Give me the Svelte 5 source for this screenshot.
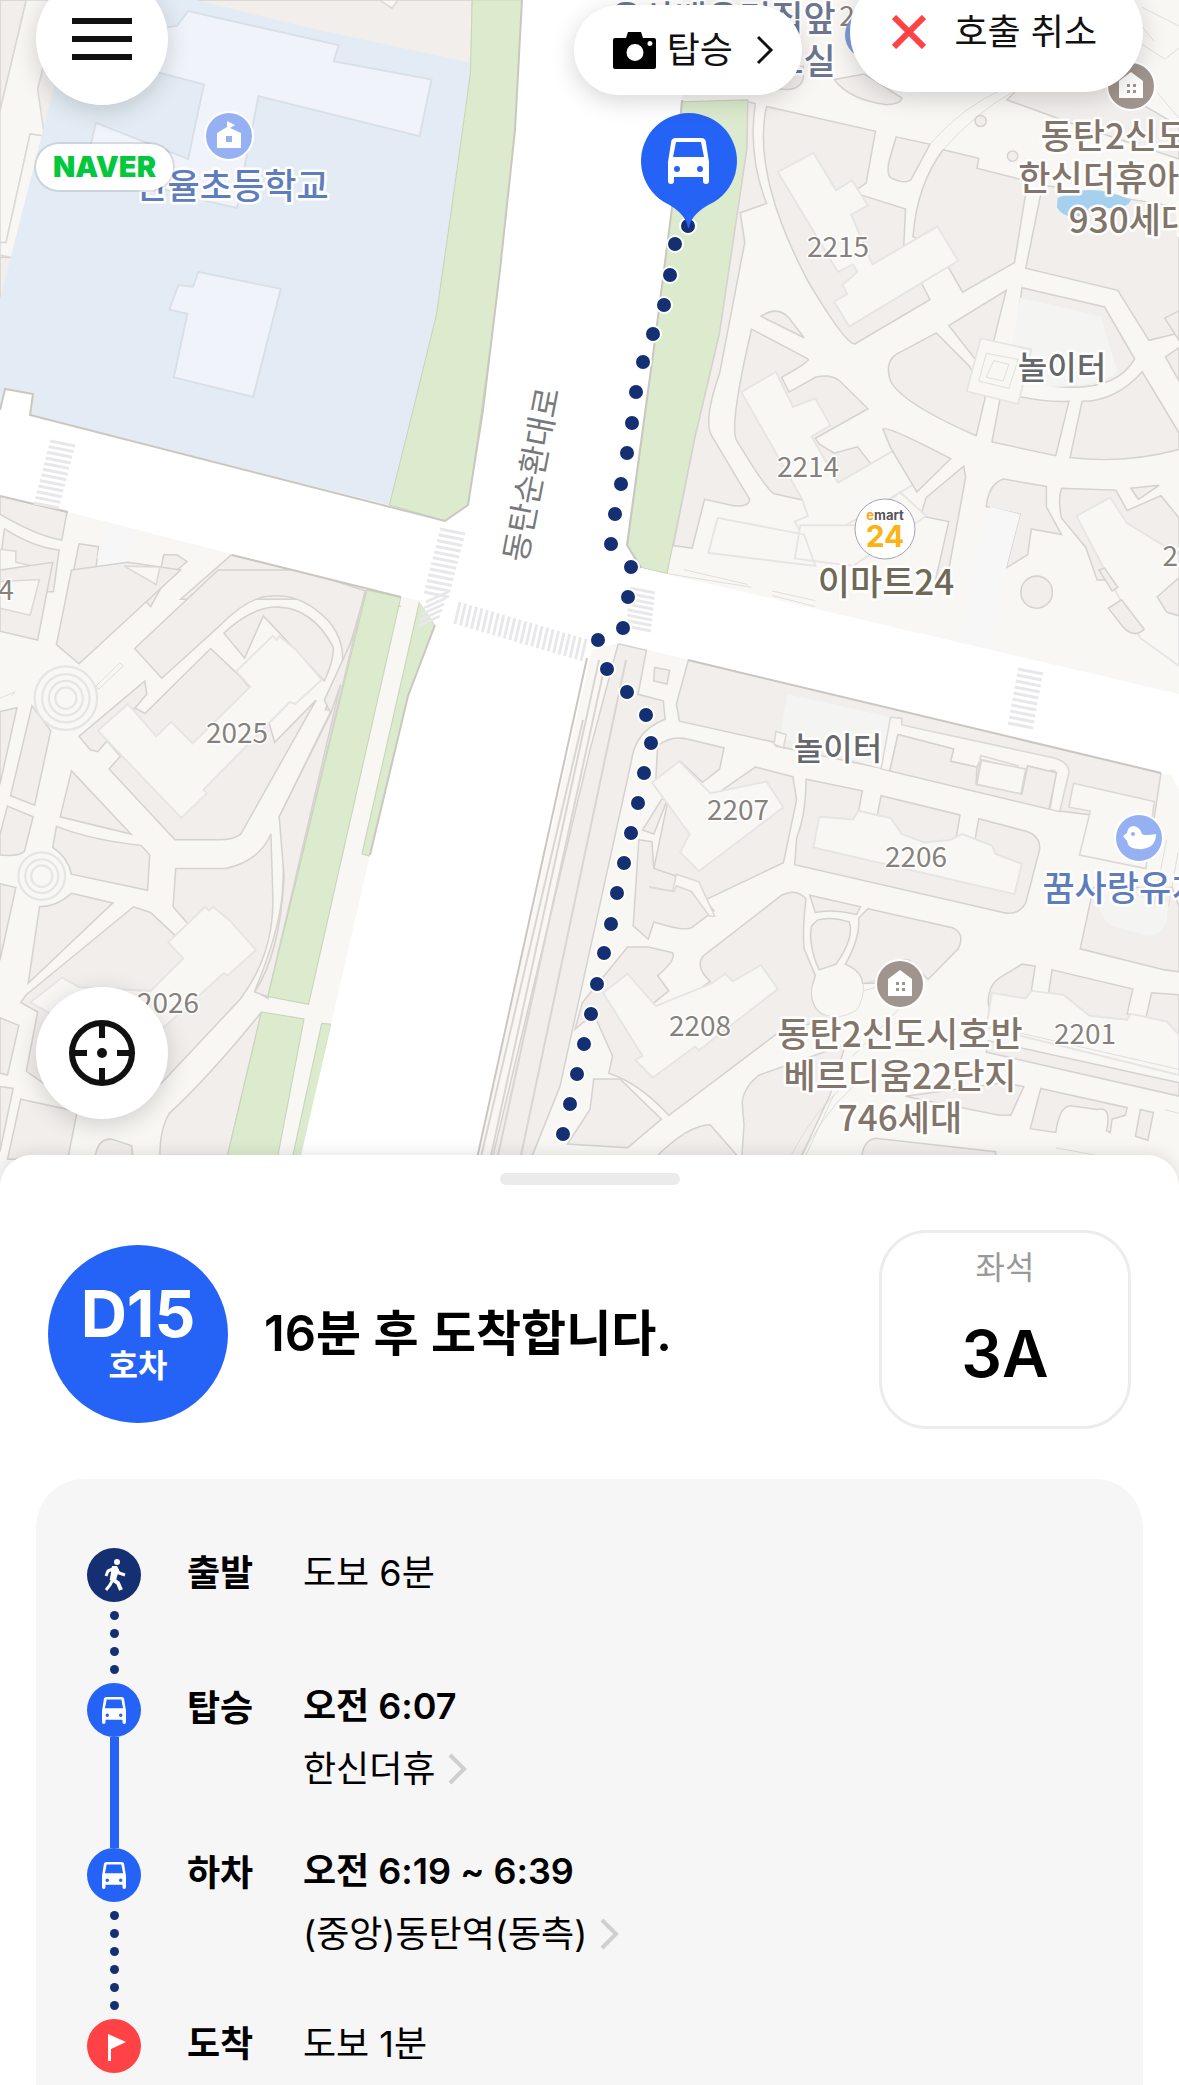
<script lang="ts">
  type Point = [number, number];

  const route: Point[] = [
    [688, 226], [675, 244], [670, 275], [664, 305], [653, 334], [643, 362], [636, 392],
    [632, 423], [627, 453], [621, 484], [615, 514], [611, 544], [631, 567], [628, 597],
    [623, 628], [598, 640], [607, 669], [627, 692], [646, 715], [651, 743], [644, 773],
    [638, 803], [631, 833], [624, 863], [617, 893], [611, 924], [604, 953], [597, 984],
    [591, 1014], [584, 1044], [577, 1074], [570, 1104], [563, 1134]
  ];

  const buildingNumbers = [
    { text: '2215', x: 838, y: 257 },
    { text: '2214', x: 808, y: 477 },
    { text: '2207', x: 738, y: 820 },
    { text: '2206', x: 916, y: 867 },
    { text: '2208', x: 700, y: 1036 },
    { text: '2201', x: 1085, y: 1044 },
    { text: '2025', x: 237, y: 743 },
    { text: '2026', x: 168, y: 1013 },
    { text: '4', x: 6, y: 600 },
    { text: '22', x: 1178, y: 566 },
    { text: '2', x: 847, y: 26 }
  ];

  const places = [
    { lines: ['한율초등학교'], x: 232, y: 199, kind: 'school' },
    { lines: ['유산배우리집앞', '방과후학습교실'], x: 723, y: 31, kind: 'bus', gap: 43 },
    { lines: ['동탄2신도시', '한신더휴아파트', '930세대'], x: 1131, y: 149, kind: 'apartment', gap: 42 },
    { lines: ['동탄2신도시호반', '베르디움22단지', '746세대'], x: 900, y: 1047, kind: 'apartment', gap: 42 },
    { lines: ['이마트24'], x: 886, y: 595, kind: 'store' },
    { lines: ['꿈사랑유치원'], x: 1139, y: 901, kind: 'school' }
  ];

  const steps = [
    { label: '출발', icon: 'walk', info: '도보 6분', line: 'dots', dots: 4 },
    { label: '탑승', icon: 'bus', time: '오전 6:07', stop: '한신더휴', line: 'solid', dots: 0 },
    { label: '하차', icon: 'bus', time: '오전 6:19 ~ 6:39', stop: '(중앙)동탄역(동측)', line: 'dots', dots: 6 },
    { label: '도착', icon: 'flag', info: '도보 1분', line: '', dots: 0 }
  ];

  // evenly spaced stripes between two points
  const stripes = (from: Point, to: Point, across: Point, count: number) =>
    Array.from({ length: count }, (_, i) => {
      const t = i / (count - 1);
      const x = from[0] + (to[0] - from[0]) * t;
      const y = from[1] + (to[1] - from[1]) * t;
      return `M${x} ${y}l${across[0]} ${across[1]}`;
    }).join('');

  const crossings = [
    stripes([50, 441], [34, 503], [25, 5], 12),
    stripes([440, 529], [424, 592], [25, 5], 12),
    stripes([448, 592], [440, 616], [-22, 10], 5),
    stripes([460, 602], [586, 639], [-5, 22], 24),
    stripes([630, 588], [626, 626], [25, 5], 8),
    stripes([1018, 669], [1008, 723], [25, 5], 10)
  ].join('');
</script>

{#snippet bus()}
  <path
    fill="currentColor"
    fill-rule="evenodd"
    d="M8 0h25q5 0 5 5l3 19v19q0 3-3 3t-3-3v-4H6v4q0 3-3 3t-3-3V24L3 5q0-5 5-5zM8 4 5 19h31L33 4zM9 28a3 3 0 1 0 0 6 3 3 0 0 0 0-6zm23 0a3 3 0 1 0 0 6 3 3 0 0 0 0-6z"
  />
{/snippet}

{#snippet house(x: number, y: number)}
  <g transform="translate({x} {y})">
    <circle r="24" fill="#9f958e" stroke="#fff" stroke-width="2" />
    <path d="M-12 12V-5L0-14 12-5V12z" fill="#fff" />
    <path d="M-4-2h3v3h-3zM2-2h3v3H2zM-4 4h3v3h-3zM2 4h3v3H2z" fill="#9f958e" />
  </g>
{/snippet}

<main>
  <section class="map" aria-label="지도">
    <svg class="map-canvas" viewBox="0 0 1179 1195">
      <rect width="1179" height="1195" fill="#f8f7f4" />

      <!-- north west -->
      <svg width="590" height="580" viewBox="0 0 1568 1568" preserveAspectRatio="none" overflow="visible">
        <path class="block" d="M0 0H70L0 300zM160 0H1255V170L1245 240 0 830V695L36 697 115 370 80 362 16 656 0 655V590z" />
        <path class="open" d="M70 0H160L100 240 118 368 80 362 16 656 0 655V300z" />
        <path class="open" d="M118 368 36 697 0 690V655L16 656 80 362z" />
        <path d="M160 170 200 0H520L800 70 1252 170 1160 850 1035 1365 0 1105V810z" fill="#e3ecf4" />
        <path class="school" d="M250 100 470 70 500 30 900 122 887 166 1147 215 1115 368 687 260 650 450 630 562 490 530 230 440 255 332 500 430 542 228 400 190z" />
        <path class="school" d="M527 735 746 781 673 1073 462 1020 498 848 450 837 474 771 513 775z" />
        <path class="green" d="M1255 0H1388L1380 300 1330 740 1245 1365 1182 1408 1035 1365 1095 1120 1160 850 1195 600 1250 200z" />
        <path class="open" d="M1008 0 1042 22 1058 0z" />
        <path class="block" d="M0 1340 178 1385 164 1460Q100 1450 0 1390zM12 1430Q90 1480 157 1487L142 1600H0V1520z" />
        <path class="open" d="M0 1485 42 1490 42 1520 105 1535 80 1680 0 1665z" />
        <path class="block" d="M210 1470 262 1478 255 1535 420 1580 435 1500 470 1500 497 1518 440 1568 400 1640 350 1580 190 1570z" />
        <path d="M280 1410 360 1430 330 1535 258 1510z" fill="#f7f7f7" />
        <path class="block" d="M615 1500 890 1568 1065 1640 975 1620H480z" />
      </svg>

      <!-- north east -->
      <svg x="590" width="589" height="580" viewBox="0 0 1568 1568" preserveAspectRatio="none" overflow="visible">
        <path class="green" d="M245 275 420 270 418 400 345 900 280 1180 205 1550 138 1535 100 1475 160 1020 220 540z" />
        <path class="block" d="M420 275 440 280Q420 420 470 550L400 575 412 655 345 1010Q300 1140 325 1180L425 1350Q425 1370 385 1368L305 1350 272 1482 222 1475 280 1180 345 900 418 400z" />
        <path class="block" d="M470 288 760 355 735 495 700 520 840 565 835 670 905 810 705 930Q680 930 580 760 430 470 470 288z" />
        <path class="block" d="M815 370 905 390 855 485Q840 500 800 480 790 470 795 440z" />
        <path class="block" d="M940 405 1035 428 1030 455 1165 490 1130 710 992 790 930 680 860 640Q870 500 940 405z" />
        <path class="block" d="M1205 500 1568 560V900L1488 920 1405 785 1160 725z" />
        <path class="block" d="M1110 270 1180 200 1380 230 1568 340V430L1300 340z" />
        <path class="block" d="M650 215Q690 270 790 283 830 280 830 265L730 200zM500 240Q560 250 568 210V180H500z" />
        <path class="block" d="M430 890 580 970Q590 975 510 1020L530 1060 600 1020Q640 1010 665 1030L740 1105 600 1185 610 1200 650 1225 712 1208 760 1270 580 1355 490 1335Q470 1325 390 1190 370 1150 430 890z" />
        <path class="block" d="M455 855Q500 825 530 860L570 913z" />
        <path class="block" d="M922 900 1010 990 1052 1075 1028 1178Q830 1090 800 1030 780 970 830 950z" />
        <path class="block" d="M955 880 1108 785 1075 920 1040 990z" />
        <path class="block" d="M1150 778 1370 830 1450 970Q1400 1060 1240 1045L1120 1020z" />
        <path d="M1145 805 1360 855 1405 1010Q1330 1050 1220 1045L1110 1010z" fill="#f4f4f3" />
        <path class="block" d="M1095 1060Q1200 1090 1275 1085L1240 1232 1070 1195zM1310 1085Q1400 1085 1470 1005L1568 1170V1215Q1420 1255 1278 1237z" />
        <path class="building" d="M1040 915 1175 945 1140 1092 1003 1058z" />
        <path class="line" d="M1055 955 1140 972 1115 1050 1035 1030zM1075 975 1115 985 1100 1030 1055 1020z" />
        <path class="building" d="M500 465 595 413 655 515 697 487 740 555 695 580 752 715 925 612 980 705 690 883 650 815 685 795 672 770 712 735 700 715 660 735z" />
        <path class="building" d="M403 1060 495 1005 540 1100 600 1078 640 1150 590 1180 660 1305 825 1208 880 1298 583 1480 545 1410 580 1395 565 1350z" />
        <path class="block" d="M780 1160Q790 1150 960 1240L870 1330 800 1210z" />
        <path class="block" d="M895 1345 995 1260 1000 1290 950 1568 920 1568 955 1410 880 1395z" />
        <path class="building" d="M825 1330 895 1395 700 1530 545 1510 560 1420 720 1420zM340 1400 570 1445 600 1530 315 1495z" />
        <path class="block" d="M1100 1295 1215 1315 1215 1370 1255 1445 1175 1430 1165 1500 1108 1535 1145 1390 1055 1370Q1060 1310 1100 1295zM1255 1320 1400 1325 1430 1380 1520 1340 1568 1400V1568L1350 1568 1320 1480 1255 1400Q1245 1350 1255 1320z" />
        <path d="M1065 1370 1145 1390 1108 1535 1060 1770 980 1750 1045 1420z" fill="#f7f7f7" />
        <path class="building" d="M1295 1395 1385 1345 1430 1415 1568 1500V1800L1465 1725z" />
        <path class="block" d="M1440 1320 1515 1312 1460 1350zM1530 860 1568 840V920zM1532 965 1568 940V1030z" />
        <path class="line" d="M905 390Q990 290 1100 240M940 405Q1030 300 1140 240" />
        <path d="M1245 535Q1330 490 1440 540 1430 570 1360 560 1270 610 1243 560z" fill="#a5d1ef" />
        <circle class="block" cx="1040" cy="327" r="15" />
        <circle class="block" cx="1125" cy="422" r="14" />
        <path class="line" d="M1470 20 1568 70M1460 60 1500 110M1470 120 1530 160 1568 130M1510 250 1568 320" />
        <path class="line" d="M250 1540 420 1580M485 1610 600 1640" />
      </svg>

      <!-- south west -->
      <svg y="570" width="590" height="600" viewBox="0 0 1568 1568" preserveAspectRatio="none" overflow="visible">
        <path class="block" d="M190 0 340-20 480 0 210 245 150 195zM0 0 140-20 100 183 0 160z" />
        <path class="open" d="M0 30 105 25 80 118 0 100zM330-10 425-8 415 38z" />
        <path class="block" d="M580 0H800L972 55 880 365 865 365 910 240Q915 180 870 130 800 60 720 68 660 70 590 140L430 283 358 205z" />
        <path class="block" d="M595 165Q670 95 740 97 830 100 885 200 890 230 862 290L700 120 650 230z" />
        <path class="block" d="M560 205 640 280 700 350 730 450 840 340 640 690Q620 705 580 705L465 705 290 520 320 487 260 420 340 350 385 375z" />
        <path class="block" d="M862 340 878 372 742 645Q760 720 750 850 740 950 677 1100L712 1120 970 55 960 130z" />
        <path class="block" d="M880 372 742 645 755 800Q745 1000 677 1103L712 1115 905 300z" />
        <path class="block" d="M210 435 385 290 390 325 260 475 240 470z" />
        <path class="block" d="M190 525 348 690 160 645zM150 670Q240 705 375 720L398 745 392 837 190 795Q180 750 140 725z" />
        <path class="block" d="M85 355 135 420 92 615 28 590zM0 370 45 360 0 560zM20 617 88 645 65 735Q50 750 0 745V690z" />
        <path class="block" d="M190 845 300 870 75 1080 105 880Q150 880 190 845zM0 820 42 830 0 1020z" />
        <path class="block" d="M467 780H600Q690 760 720 690L725 850Q730 1000 640 1120L430 1340 300 1420 200 1400 70 1310 100 1155 55 1130 70 1110 355 880 400 895 465 955 500 925 460 880z" />
        <path class="block" d="M695 1155Q560 1320 450 1420 425 1460 425 1530H605L695 1155zM55 1383 205 1415 180 1540H20zM0 1170 50 1190 20 1320 0 1315zM0 1350 35 1355 0 1520zM250 1568Q250 1480 300 1488L350 1505 355 1568z" />
        <path class="building" d="M260 420 340 350 415 435 455 397 512 453 665 305 628 265 725 172 735 183 742 173 788 210 855 287 785 350 770 345 540 575 550 583 482 648z" />
        <path class="building" d="M447 973 545 880 555 890 565 880 610 915 680 993 605 1060 595 1053 430 1200 300 1250 80 1130 165 1065 210 1090 400 1100 487 1015z" />
        <path class="green" d="M975 52 1065 72 820 1135 712 1115zM1115 82 1155 145 1085 330 985 748 962 742zM695 1155 808 1173 725 1600 590 1590zM855 1185 880 1187 790 1600 765 1590z" />
        <circle class="ring" cx="175" cy="335" r="83" />
        <circle class="ring" cx="175" cy="335" r="63" />
        <circle class="ring" cx="175" cy="335" r="45" />
        <circle class="ring" cx="175" cy="335" r="28" />
        <circle class="ring" cx="111" cy="800" r="62" />
        <circle class="ring" cx="111" cy="800" r="44" />
        <circle class="ring" cx="111" cy="800" r="28" />
        <path class="line" d="M255 303 318 243 328 250 262 312zM0 335 40 318 30 330" />
      </svg>

      <!-- south east -->
      <svg x="590" y="570" width="589" height="600" viewBox="0 0 1568 1568" preserveAspectRatio="none" overflow="visible">
        <path class="block" d="M75 193 150 210 128 325 195 342 200 390Q120 420 110 500L-80 1350-190 1620H-280L0 470z" />
        <path class="block" d="M172 255 212 262 205 298 170 290zM262 235 1520 530 1500 660 1250 630 1240 530 820 430 830 390 800 385 775 518 495 460 490 450 238 395 230 350z" />
        <path d="M525 325 802 385 775 518 505 440z" fill="#f4f4f3" />
        <path class="open" d="M495 422 522 430 515 465 490 455zM800 385 830 388 830 405 1230 490Q1275 500 1275 530L1250 632 1225 625 1240 530Q1240 520 1220 525L1165 512 1150 585 1030 560 1040 485 1140 512 1135 517 1040 495 1030 515 960 500 968 468 820 430 798 525 775 520z" />
        <path class="block" d="M820 430 968 468 960 500 1030 515 1028 560 1150 585 1165 512 1242 530 1222 625 798 525z" />
        <path class="open" d="M1042 498 1160 520 1147 585 1030 560z" />
        <path class="block" d="M180 460Q210 435 250 440L357 465 345 520 300 555 240 500 175 550zM440 515 540 540 550 600 515 765 290 870 170 780 210 590 330 590z" />
        <path class="block" d="M575 547 725 577 715 630 765 640 775 590 985 640 975 700 1025 705 1035 650 1150 680Q1200 690 1197 730L1160 870Q1140 905 1100 895L545 770 550 700Q575 640 575 547z" />
        <path class="block" d="M190 600 210 590 170 690 140 680zM130 705 165 710 170 780 260 810 330 890 270 935Q250 945 170 920L155 965 115 930z" />
        <path class="open" d="M160 830 220 840 230 795 290 815 332 905 318 905 270 840 230 825 225 840 160 828z" />
        <path class="building" d="M165 555 238 500 320 583 470 553 515 620 290 787 240 738 265 690z" />
        <path class="building" d="M610 645 700 652 715 630 800 648 830 690 890 712 960 705 990 690 1070 720 1080 742 1150 768 1130 847 595 725z" />
        <path class="block" d="M585 850 720 880 710 900Q640 885 600 895zM740 885 965 935Q1000 950 980 990L900 1070 850 1020Q800 1010 765 1080L725 1080Q725 1050 680 1030 720 960 715 910zM605 915Q640 905 690 920 705 960 655 1030L610 1045Q580 980 590 930z" />
        <path class="block" d="M300 1010 510 850Q550 830 575 860 565 940 570 990L600 1060Q570 1150 640 1170L500 1210 210 1425Q130 1340 50 1315L60 1270 10 1160-40 1200-20 1130 100 985 155 985 220 1000Q230 1020 180 1060L210 1100 165 1135 200 1160 320 1075Q280 1040 300 1010z" />
        <path class="block" d="M10 1330 80 1330 190 1435 100 1510-60 1500 0 1410z" />
        <path class="building" d="M35 1105 100 1055 175 1140 325 1080 360 1055 380 1075 455 1033 500 1095 290 1255 280 1245 167 1327 120 1280 140 1270z" />
        <path class="block" d="M405 1390Q410 1350 450 1320L680 1240 640 1370 530 1600H400L410 1450zM170 1540Q260 1450 320 1450L400 1540 350 1600z" />
        <path class="line" d="M520 1560Q600 1400 690 1340M550 1560Q610 1430 700 1350M650 1370 570 1540M730 1080 765 1072M725 1100 765 1090M700 1270 850 1120" />
        <path class="open" d="M1287 557 1502 605 1480 780 1303 745 1332 630 1275 620z" />
        <path class="block" d="M1340 830 1550 830 1568 880V1050L1530 1045 1305 990z" />
        <path d="M1350 830 1540 870 1535 920Q1520 960 1480 955L1390 930Q1350 910 1350 830z" fill="#f4f4f3" />
        <path class="block" d="M1060 1130Q1060 1080 1100 1060L1150 1030 1185 1035 1175 1100 1220 1110 1230 1045 1445 1095 1430 1160 1480 1170 1495 1105 1568 1110V1230L1065 1160z" />
        <path class="building" d="M1070 1105 1160 1120 1175 1100 1260 1110 1330 1165 1430 1175 1440 1160 1535 1180 1568 1215V1320L1055 1195z" />
        <path class="block" d="M1060 1230 1568 1340V1375L1055 1260zM840 1375 1100 1340 1155 1350 1120 1425 1090 1425 860 1380z" />
        <path class="block" d="M1200 1355 1430 1405 1425 1425 1390 1435 1385 1470 1375 1465Q1390 1400 1350 1410L1280 1400Q1250 1400 1240 1470L1172 1460zM1465 1410 1500 1418 1485 1490 1452 1480zM720 1568Q720 1490 760 1485L1080 1520V1600H720z" />
        <path class="line" d="M1055 1190 1568 1305M1240 1510 1350 1530M1530 1410 1568 1420M1535 705 1500 880M1565 740 1540 880" />
        <circle cx="660" cy="1105" r="69" fill="#f8f7f4" />
        <path class="line" d="M600 1060Q570 1130 620 1160 660 1180 710 1150 730 1120 728 1080" />
        <circle class="block" cx="1189" cy="58" r="42" />
        <path class="block" d="M1380 100 1415 78 1475 155Q1450 180 1420 150zM1510 70 1568 20V120L1535 110zM1355 0 1390 55 1405 45 1370-5z" />
        <path class="line" d="M145 0 430 45M485 55 600 80" />
      </svg>

      <!-- roads -->
      <path
        class="road"
        d="M522 0H682V100L673 200 655 340 627 545 641 568 1179 694V790L1172 776 1161 773 620 643 592 650 469 1195H292L370 855 408 696 435 625 418 600 401 597 335 580 68 512 0 496V410L5 389 33 394 30 415 445 521 468 505 483 410 500 270 515 130z"
      />
      <path class="curb" d="M0 410 5 389 33 394 30 415 445 521 468 505 483 410 500 270 515 130 522 0M682 100 673 200 655 340 627 545 641 568M688 660 1161 773M587 658 469 1195M435 625 408 696 370 855M0 496 68 512M232 555 401 597" />
      <path class="line" d="M599 660 490 1160M606 660 497 1160M626 660 520 1160M583 720 478 1170" />
      <path d={crossings} stroke="#e8e8eb" stroke-width="3" />

      <text class="street" transform="translate(533 475) rotate(-79)" y="10">동탄순환대로</text>

      {#each buildingNumbers as item}
        <text class="number" x={item.x} y={item.y}>{item.text}</text>
      {/each}
      <text class="park" x="1062" y="379">놀이터</text>
      <text class="park" x="838" y="760">놀이터</text>

      {@render house(1131, 86)}
      {@render house(900, 984)}

      <circle cx="869" cy="35" r="24" fill="#7f98d8" />

      <g transform="translate(229 136)">
        <circle r="24" fill="#95b1f3" stroke="#fff" stroke-width="2" />
        <path d="M-12 12V-3L-2-9V-15L6-11 1-8V-8L12-3V12z" fill="#fff" />
        <path d="M-3 0h6v6h-6z" fill="#95b1f3" />
      </g>

      <g transform="translate(1139 838)">
        <circle r="24" fill="#95b1f3" stroke="#fff" stroke-width="2" />
        <path d="M-16-2-12-5Q-11-12-5-12 1-11 3-4 6-2 17-4 17 4 12 8 6 12 0 11-11 11-12 3z" fill="#fff" />
        <circle cx="-6" cy="-4" r="2" fill="#95b1f3" />
      </g>

      <g transform="translate(885 529)">
        <circle r="30" fill="#fff" stroke="#a4a5b5" stroke-width="1" />
        <text class="emart" y="-9"><tspan fill="#f6a81c">e</tspan>mart</text>
        <text class="emart-number" y="18">24</text>
      </g>

      {#each places as place}
        {#each place.lines as line, i}
          <text class="place {place.kind}" x={place.x} y={place.y + i * (place.gap ?? 0)}>{line}</text>
        {/each}
      {/each}

      {#each route as [x, y]}
        <circle cx={x} cy={y} r="8" fill="#142f72" stroke="#fff" stroke-width="2" />
      {/each}

      <path d="M688 228Q686 213 664 202A48 48 0 1 1 714 202Q691 213 689 228z" fill="#2563f7" />
      <g class="pin-bus" transform="translate(668 138)">{@render bus()}</g>
    </svg>

    <button class="round menu" aria-label="메뉴">
      <svg width="60" height="42" viewBox="0 0 60 42">
        <path d="M0 3h60M0 21h60M0 39h60" stroke="#111" stroke-width="6" />
      </svg>
    </button>

    <a class="naver" href="#naver">NAVER</a>

    <button class="pill board">
      <svg width="43" height="37" viewBox="0 0 43 37">
        <path
          fill-rule="evenodd"
          d="M2 6h11l2-6h13l2 6h11q2 0 2 2v27q0 2-2 2H2q-2 0-2-2V8q0-2 2-2zM22 12a8 8 0 1 0 0 17 8 8 0 0 0 0-17zM37 9a2 2 0 1 0 0 5 2 2 0 0 0 0-5z"
        />
      </svg>
      <span>탑승</span>
      <svg class="next" width="18" height="30" viewBox="0 0 18 30">
        <path d="M2 2 15 15 2 28" fill="none" stroke="#111" stroke-width="3" />
      </svg>
    </button>

    <button class="pill cancel">
      <svg width="34" height="34" viewBox="0 0 34 34">
        <path d="M2 2 32 32M32 2 2 32" stroke="#ff4245" stroke-width="6" />
      </svg>
      <span>호출 취소</span>
    </button>

    <button class="round locate" aria-label="현재 위치">
      <svg width="66" height="66" viewBox="0 0 66 66">
        <circle cx="33" cy="33" r="30" fill="none" stroke="#111" stroke-width="6" />
        <path d="M33 3v15M33 48v15M3 33h15M48 33h15" stroke="#111" stroke-width="6" />
        <circle cx="33" cy="33" r="5" fill="#111" />
      </svg>
    </button>
  </section>

  <section class="sheet">
    <div class="handle"></div>

    <header class="summary">
      <div class="vehicle">
        <strong>D15</strong>
        <span>호차</span>
      </div>
      <h1>16분 후 도착합니다.</h1>
      <div class="seat">
        <span>좌석</span>
        <strong>3A</strong>
      </div>
    </header>

    <ol class="timeline">
      {#each steps as step}
        <li>
          <div class="track">
            <span class="badge {step.icon}">
              {#if step.icon === 'walk'}
                <svg width="54" height="54" viewBox="0 0 54 54">
                  <circle cx="30" cy="14" r="3" fill="#fff" />
                  <path d="M29 20 25 31 31 35 34 42" fill="none" stroke="#fff" stroke-width="4" />
                  <path d="M25 33 23 37 19 42M28 20 21 23 19 28M29 20 32 25 38 27" fill="none" stroke="#fff" stroke-width="3" />
                  <path d="M25 18h5l2 4-3 10-6-1z" fill="#fff" />
                </svg>
              {:else if step.icon === 'bus'}
                <svg width="24" height="27" viewBox="0 0 41 46">{@render bus()}</svg>
              {:else}
                <svg width="54" height="54" viewBox="0 0 54 54">
                  <path d="M21 15 39 23 24 30V42H21z" fill="#fff" />
                </svg>
              {/if}
            </span>
            {#if step.line === 'dots'}
              <div class="dots">
                {#each Array(step.dots) as _}
                  <i></i>
                {/each}
              </div>
            {:else if step.line === 'solid'}
              <div class="bar"></div>
            {/if}
          </div>
          <b class="label">{step.label}</b>
          <div class="detail">
            {#if step.info}
              <p>{step.info}</p>
            {:else}
              <p class="time"><b>{step.time}</b></p>
              <a href="#stop">
                {step.stop}
                <svg width="20" height="32" viewBox="0 0 20 32">
                  <path d="M2 2 16 16 2 30" fill="none" stroke="#cfcfcf" stroke-width="4" />
                </svg>
              </a>
            {/if}
          </div>
        </li>
      {/each}
    </ol>
  </section>
</main>

<style>
  :global(body) {
    background: #fff;
    overflow: hidden;
  }

  main {
    height: 100vh;
    min-height: 1400px;
    display: flex;
    flex-direction: column;
    overflow: hidden;
    color: #000;
    font-family: Inter, 'Noto Sans CJK KR', sans-serif;
  }

  button {
    border: 0;
    padding: 0;
    background: #fff;
    color: #111;
    font: inherit;
    cursor: pointer;
  }

  .map {
    position: relative;
    flex: none;
  }

  .map-canvas {
    display: block;
    width: 100%;
    height: auto;
    font-family: 'Noto Sans CJK KR', sans-serif;
  }

  .block {
    fill: #f1eeec;
    stroke: #d5d2cf;
    stroke-width: 4;
  }

  .open {
    fill: #f8f7f4;
    stroke: #dbd8d5;
    stroke-width: 4;
  }

  .building {
    fill: #f8f7f4;
    stroke: #e7e5e3;
    stroke-width: 5;
  }

  .school {
    fill: #f0f4fa;
    stroke: #d9dfe6;
    stroke-width: 5;
  }

  .green {
    fill: #dcebcd;
    stroke: #c9d5bb;
    stroke-width: 3;
  }

  .ring {
    fill: #f8f7f4;
    stroke: #e5e5e4;
    stroke-width: 6;
  }

  .line {
    fill: none;
    stroke: #d9d6d2;
    stroke-width: 2;
  }

  .road {
    fill: #fff;
  }

  .curb {
    fill: none;
    stroke: #cbc7c0;
    stroke-width: 2;
  }

  text {
    text-anchor: middle;
    paint-order: stroke;
    stroke: #fff;
    stroke-width: 5px;
    stroke-linejoin: round;
    font-weight: 500;
  }

  .street {
    font-size: 32px;
    font-weight: 400;
    fill: #77797b;
    stroke: none;
  }

  .number {
    font-size: 28px;
    font-weight: 400;
    fill: #87817c;
    stroke-width: 3px;
  }

  .park {
    font-size: 32px;
    fill: #66676b;
  }

  .place {
    font-size: 35px;
  }

  .place.school {
    fill: #5f7dbd;
    stroke: #fff;
    stroke-width: 5px;
  }

  .bus {
    fill: #6c7690;
  }

  .apartment {
    fill: #84756a;
  }

  .store {
    fill: #706957;
  }

  .emart {
    font: 700 13px Inter, sans-serif;
    fill: #55555d;
    stroke: none;
  }

  .emart-number {
    font: 700 30px Inter, sans-serif;
    fill: #fcb316;
    stroke: none;
  }

  .pin-bus {
    color: #fff;
  }

  .round {
    position: absolute;
    left: 36px;
    width: 132px;
    height: 132px;
    border-radius: 50%;
    display: grid;
    place-items: center;
    box-shadow: 0 6px 24px rgba(0, 0, 0, 0.16);
  }

  .menu {
    top: -27px;
  }

  .locate {
    bottom: 76px;
  }

  .naver {
    position: absolute;
    top: 144px;
    left: 36px;
    padding: 0 17px;
    border-radius: 23px;
    background: #fff;
    box-shadow: 0 0 0 2px rgba(0, 0, 0, 0.1);
    color: #03c73c;
    font-size: 29px;
    font-weight: 900;
    line-height: 46px;
    text-decoration: none;
  }

  .pill {
    position: absolute;
    display: flex;
    align-items: center;
    font-size: 36px;
    border-radius: 60px;
    box-shadow: 0 6px 24px rgba(0, 0, 0, 0.16);
  }

  .pill span {
    padding-bottom: 6px;
  }

  .board {
    top: 5px;
    right: 377px;
    height: 90px;
    padding: 0 28px 0 39px;
    gap: 11px;
  }

  .next {
    margin-left: 12px;
  }

  .cancel {
    top: -28px;
    right: 36px;
    height: 120px;
    padding: 0 46px 0 42px;
    gap: 28px;
  }

  .sheet {
    position: relative;
    flex: 1;
    margin-top: -40px;
    padding: 18px 36px 0;
    border-radius: 32px 32px 0 0;
    background: #fff;
    box-shadow: 0 -2px 16px rgba(0, 0, 0, 0.1);
    display: flex;
    flex-direction: column;
  }

  .handle {
    flex: none;
    width: 180px;
    height: 12px;
    margin: 0 auto;
    border-radius: 6px;
    background: #ebebeb;
  }

  .summary {
    display: flex;
    align-items: center;
    margin: 45px 12px 50px;
  }

  .vehicle {
    width: 180px;
    height: 178px;
    margin-top: 8px;
    border-radius: 50%;
    background: #2563f7;
    color: #fff;
    display: flex;
    flex-direction: column;
    align-items: center;
    justify-content: center;
    font-size: 32px;
    font-weight: 600;
    line-height: 40px;
  }

  .vehicle strong,
  .seat strong {
    font-size: 64px;
    font-weight: 600;
    line-height: 64px;
  }

  .vehicle strong {
    font-weight: 700;
  }

  h1 {
    flex: 1;
    margin: 8px 0 0 36px;
    font-size: 49px;
    font-weight: 600;
    line-height: 60px;
  }

  .seat {
    box-sizing: border-box;
    width: 252px;
    height: 199px;
    padding-top: 15px;
    border: 3px solid #ececec;
    border-radius: 48px;
    display: flex;
    flex-direction: column;
    align-items: center;
    gap: 34px;
    color: #999;
    font-size: 32px;
    line-height: 40px;
  }

  .seat strong {
    color: #000;
  }

  .timeline {
    flex: 1;
    margin: 0;
    padding: 69px 51px 0;
    border-radius: 48px 48px 0 0;
    background: #f6f6f6;
    list-style: none;
    font-size: 36px;
    line-height: 50px;
  }

  li {
    display: grid;
    grid-template-columns: 54px 70px 1fr;
    column-gap: 46px;
  }

  .track {
    display: flex;
    flex-direction: column;
    align-items: center;
  }

  .badge {
    width: 54px;
    height: 54px;
    border-radius: 50%;
    display: grid;
    place-items: center;
    background: #2563f7;
    color: #fff;
  }

  .badge.walk {
    background: #142f72;
  }

  .badge.flag {
    background: #ff4245;
  }

  .dots {
    padding: 9px 0;
    display: grid;
    gap: 9px;
  }

  .dots i {
    width: 9px;
    height: 9px;
    border-radius: 50%;
    background: #142f72;
  }

  .bar {
    width: 9px;
    height: 111px;
    background: #2563f7;
  }

  .detail p {
    margin: 0;
  }

  .detail .time {
    line-height: 46px;
  }

  .detail a {
    display: flex;
    align-items: center;
    gap: 13px;
    margin-top: 15px;
    color: inherit;
    text-decoration: none;
  }

  b {
    font-weight: 600;
  }
</style>
